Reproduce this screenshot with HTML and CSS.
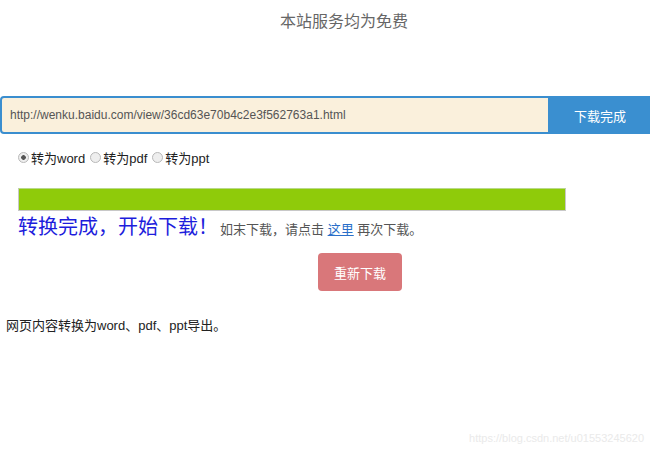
FILE: index.html
```html
<!DOCTYPE html>
<html lang="zh">
<head>
    <meta charset="UTF-8">
    <title>网页内容转换</title>
    <link rel="stylesheet" href="styles.css">
</head>
<body>
    <div class="notice">本站服务均为免费</div>

    <div class="url-bar">
        <input type="text" class="url-input" value="http://wenku.baidu.com/view/36cd63e70b4c2e3f562763a1.html">
        <button class="url-btn">下载完成</button>
    </div>

    <div class="options">
        <label><input type="radio" name="fmt" checked>转为word</label>
        <label><input type="radio" name="fmt">转为pdf</label>
        <label><input type="radio" name="fmt">转为ppt</label>
    </div>

    <div class="progress">
        <div class="progress-fill"></div>
    </div>

    <div class="result">
        <span class="done">转换完成，开始下载！</span>
        <span class="hint">如末下载，请点击 <a href="#">这里</a> 再次下载。</span>
    </div>

    <div class="retry-row">
        <button class="retry-btn">重新下载</button>
    </div>

    <p class="desc">网页内容转换为word、pdf、ppt导出。</p>

    <div class="watermark">https://blog.csdn.net/u01553245620</div>
</body>
</html>
```

FILE: styles.css
```css
body {
    font-family: 'Liberation Sans', 'Noto Sans CJK SC', sans-serif;
    margin: 0;
    padding: 0;
    width: 650px;
    height: 450px;
    position: relative;
    background: #fff;
    color: #222;
}

.notice {
    text-align: center;
    font-size: 16px;
    color: #666;
    padding-top: 10px;
    padding-left: 38px;
    height: 24px;
    line-height: 24px;
}

.url-bar {
    display: flex;
    margin-top: 62px;
    height: 38px;
}

.url-input {
    flex: 1;
    box-sizing: border-box;
    height: 38px;
    border: 2px solid #3a8ecf;
    border-radius: 4px 0 0 4px;
    background-color: #faf0dc;
    padding: 0 8px;
    font-family: 'Liberation Sans', 'Noto Sans CJK SC', sans-serif;
    font-size: 12px;
    color: #555;
    outline: none;
}

.url-btn {
    width: 100px;
    height: 38px;
    border: none;
    background-color: #3a8fd0;
    color: #fff;
    font-family: 'Liberation Sans', 'Noto Sans CJK SC', sans-serif;
    font-size: 13px;
    padding: 0;
}

.options {
    display: flex;
    gap: 5px;
    padding-left: 18px;
    margin-top: 13px;
    font-size: 13px;
    color: #222;
    height: 20px;
    align-items: center;
}

.options label {
    display: flex;
    align-items: center;
}

.options input {
    appearance: none;
    -webkit-appearance: none;
    box-sizing: border-box;
    width: 11px;
    height: 11px;
    margin: 0 2px 0 0;
    border: 1px solid #b8b8b8;
    border-radius: 50%;
    background: #eee;
}

.options input:checked {
    background: radial-gradient(circle, #555 0, #555 2px, #eee 2.6px);
}

.progress {
    margin: 21px 0 0 18px;
    width: 548px;
    height: 23px;
    box-sizing: border-box;
    border: 1px solid #c8c8c8;
    border-top-color: #b9d98a;
}

.progress-fill {
    height: 100%;
    background-color: #8fcb0a;
}

.result {
    padding-left: 18px;
    margin-top: 0;
    height: 30px;
    display: flex;
    align-items: baseline;
}

.done {
    font-size: 20px;
    color: #1d1ddc;
    margin-right: 2px;
}

.hint {
    font-size: 13px;
    color: #555;
}

.hint a {
    color: #2a6fc9;
}

.retry-row {
    display: flex;
    justify-content: center;
    padding-left: 70px;
    margin-top: 12px;
}

.retry-btn {
    width: 84px;
    height: 38px;
    border: none;
    border-radius: 4px;
    background-color: #d9777a;
    color: #fff;
    font-family: 'Liberation Sans', 'Noto Sans CJK SC', sans-serif;
    font-size: 13px;
}

.desc {
    margin: 24px 0 0 6px;
    font-size: 13px;
    color: #222;
}

.watermark {
    position: absolute;
    right: 6px;
    bottom: 6px;
    font-size: 11px;
    color: #eaeaea;
}
```
